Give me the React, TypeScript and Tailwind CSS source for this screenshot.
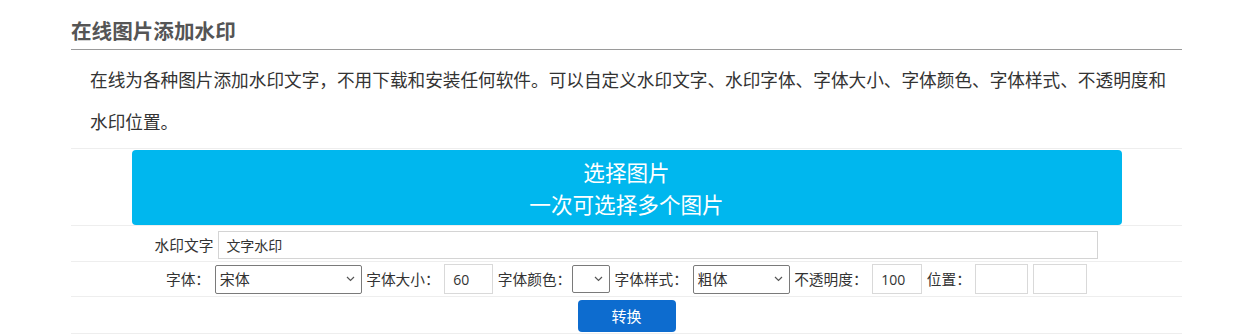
export default function App() {
  return (
    <div className="w-[1242px] h-[334px] bg-white overflow-hidden font-['Noto_Sans_CJK_SC',sans-serif]">
      <div className="ml-[71px] w-[1111px]">
        <h2 className="pt-[16px] pb-[5px] text-[20.6px] leading-[28px] font-bold text-[#555555] border-b border-[#9a9a9a]">
          在线图片添加水印
        </h2>

        <p className="mt-[9px] pl-[19px] pr-[10px] text-[17.65px] leading-[42px] text-[#333333]">
          在线为各种图片添加水印文字，不用下载和安装任何软件。可以自定义水印文字、水印字体、字体大小、字体颜色、字体样式、不透明度和水印位置。
        </p>

        <div className="mt-[5px] border-t border-[#eeeeee] text-[14.7px] text-[#333333]">
          {/* upload */}
          <div className="h-[77px] flex justify-center pt-[1px] border-b border-[#eeeeee]">
            <button className="w-[990px] h-[75px] bg-[#00b7ee] rounded-[4px] text-white text-[21.6px] leading-[32px] flex flex-col items-center justify-center">
              <span>选择图片</span>
              <span>一次可选择多个图片</span>
            </button>
          </div>

          {/* watermark text */}
          <div className="h-[36px] flex justify-center items-start pt-[5px] gap-[5px] border-b border-[#eeeeee]">
            <span className="leading-[28px]">水印文字</span>
            <input
              defaultValue="文字水印"
              className="w-[880px] h-[28px] border border-[#d4d4d4] px-[7px] text-[14px] text-[#333333] outline-none"
            />
          </div>

          {/* options */}
          <div className="h-[35px] flex justify-center items-center gap-[4.6px] border-b border-[#eeeeee]">
            <span>字体：</span>
            <div className="w-[147px] h-[29px] border border-[#7a7a7a] rounded-[2px] flex items-center justify-between pl-[4px] pr-[6px]">
              <span className="text-[15px]">宋体</span>
              <Chevron />
            </div>
            <span>字体大小：</span>
            <input
              defaultValue="60"
              className="w-[49px] h-[30px] border border-[#d9d9d9] px-[8px] text-[14px] font-['Open_Sans',sans-serif] text-[#333333] outline-none"
            />
            <span>字体颜色：</span>
            <div className="-ml-[4px] w-[38px] h-[28px] border border-[#7a7a7a] rounded-[2px] flex items-center justify-end pr-[6px]">
              <Chevron />
            </div>
            <span>字体样式：</span>
            <div className="w-[97px] h-[29px] border border-[#7a7a7a] rounded-[2px] flex items-center justify-between pl-[4px] pr-[6px]">
              <span className="text-[15px]">粗体</span>
              <Chevron />
            </div>
            <span>不透明度：</span>
            <input
              defaultValue="100"
              className="w-[50px] h-[30px] border border-[#d9d9d9] px-[8px] text-[14px] font-['Open_Sans',sans-serif] text-[#333333] outline-none"
            />
            <span>位置：</span>
            <input className="w-[53px] h-[30px] border border-[#d9d9d9] outline-none" />
            <input className="w-[54px] h-[30px] border border-[#d9d9d9] outline-none" />
          </div>

          {/* submit */}
          <div className="h-[37px] flex justify-center pt-[3px] border-b border-[#eeeeee]">
            <button className="w-[98px] h-[32px] bg-[#0d6ccf] rounded-[4px] text-white text-[15px]">转换</button>
          </div>
        </div>
      </div>
    </div>
  );
}

function Chevron() {
  return (
    <svg width="9" height="6" viewBox="0 0 9 6" fill="none" stroke="#555" strokeWidth="1.2">
      <path d="M1 1l3.5 3.5L8 1" />
    </svg>
  );
}
